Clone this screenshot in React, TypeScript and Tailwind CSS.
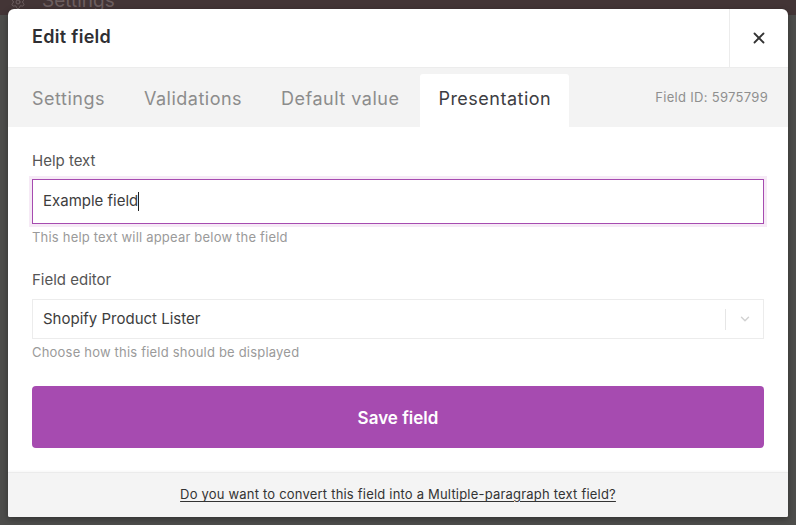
import { X, ChevronDown, Settings } from 'lucide-react';

const tabs = ['Settings', 'Validations', 'Default value', 'Presentation'];

export default function App() {
    const active = 'Presentation';
    return (
        <div
            className="relative w-[796px] h-[525px] overflow-hidden bg-[#4d4d4b]"
            style={{ fontFamily: 'Inter, "Noto Sans", sans-serif' }}
        >
            {/* Page behind the modal */}
            <div className="h-[27px] bg-[#433536] flex items-center px-2.5 gap-4 text-[#6d5f60] -mt-[12px] pt-0">
                <Settings className="w-4 h-4" strokeWidth={1.5} />
                <span className="text-[19px]">Settings</span>
            </div>

            {/* Modal */}
            <div className="absolute left-[8px] top-[9px] w-[780px] h-[508px] bg-white rounded-t-[6px] rounded-b-[2px] shadow-[0_2px_6px_rgba(0,0,0,0.35)] flex flex-col overflow-hidden">
                {/* Header */}
                <div className="h-[59px] flex items-stretch border-b border-[#ececec] shrink-0">
                    <h2 className="flex-1 flex items-center pl-6 pb-[3px] text-[18px] font-semibold tracking-[0.3px] text-[#2f2f33]">Edit field</h2>
                    <button className="w-[59px] flex items-center justify-center border-l border-[#ececec] text-[#333]">
                        <X className="w-[18px] h-[18px]" strokeWidth={2.4} />
                    </button>
                </div>

                {/* Tabs */}
                <div className="h-[59px] bg-[#f3f3f3] flex items-end pl-[6px] pr-5 shrink-0">
                    <div className="flex items-end gap-[3px]">
                        {tabs.map((t) => (
                            <div
                                key={t}
                                className={
                                    t === active
                                        ? 'h-[53px] px-[18px] pb-[4px] flex items-center bg-white rounded-t-[3px] text-[18px] tracking-[0.5px] text-[#3d3d42]'
                                        : 'h-[53px] px-[18px] pb-[4px] flex items-center text-[18px] tracking-[0.5px] text-[#8c8c8c]'
                                }
                            >
                                {t}
                            </div>
                        ))}
                    </div>
                    <div className="ml-auto h-[59px] flex items-center text-[13px] tracking-[0.3px] text-[#8f8f8f]">Field ID: 5975799</div>
                </div>

                {/* Body */}
                <div className="flex-1 px-6 pt-[24px]">
                    <label className="block text-[15px] leading-[20px] text-[#555]">Help text</label>
                    <div className="mt-[5px] p-[3px] -mx-[3px] bg-[#f6eaf6]">
                        <div className="h-[45px] border border-[#a64bb0] bg-white flex items-center px-[10px] text-[15px] text-[#3d3d3d]">
                            Example field
                            <span className="w-px h-[19px] bg-[#222]" />
                        </div>
                    </div>
                    <p className="mt-px text-[13px] leading-[18px] tracking-[0.2px] text-[#9a9a9a]">This help text will appear below the field</p>

                    <label className="block mt-[24px] text-[15px] leading-[20px] text-[#555]">Field editor</label>
                    <div className="mt-[9px] h-[40px] border border-[#ececec] flex items-center pl-[10px] text-[15px] text-[#3d3d3d]">
                        <span className="flex-1">Shopify Product Lister</span>
                        <span className="w-px h-[21px] bg-[#e6e6e6]" />
                        <span className="w-[37px] flex items-center justify-center text-[#d2d2d2]">
                            <ChevronDown className="w-[14px] h-[14px]" strokeWidth={2.5} />
                        </span>
                    </div>
                    <p className="mt-[4px] text-[13px] leading-[18px] tracking-[0.2px] text-[#9a9a9a]">Choose how this field should be displayed</p>

                    <button className="mt-[25px] w-full h-[62px] pt-[3px] rounded-[4px] bg-[#a64bb0] text-white text-[17px] font-semibold">
                        Save field
                    </button>
                </div>

                {/* Footer */}
                <div className="h-[45px] shrink-0 bg-[#f4f4f4] border-t border-[#ebebeb] shadow-[0_-1px_2px_rgba(0,0,0,0.04)] flex items-center justify-center">
                    <a className="text-[13px] tracking-[0.2px] text-[#333] underline underline-offset-2">
                        Do you want to convert this field into a Multiple-paragraph text field?
                    </a>
                </div>
            </div>
        </div>
    );
}
